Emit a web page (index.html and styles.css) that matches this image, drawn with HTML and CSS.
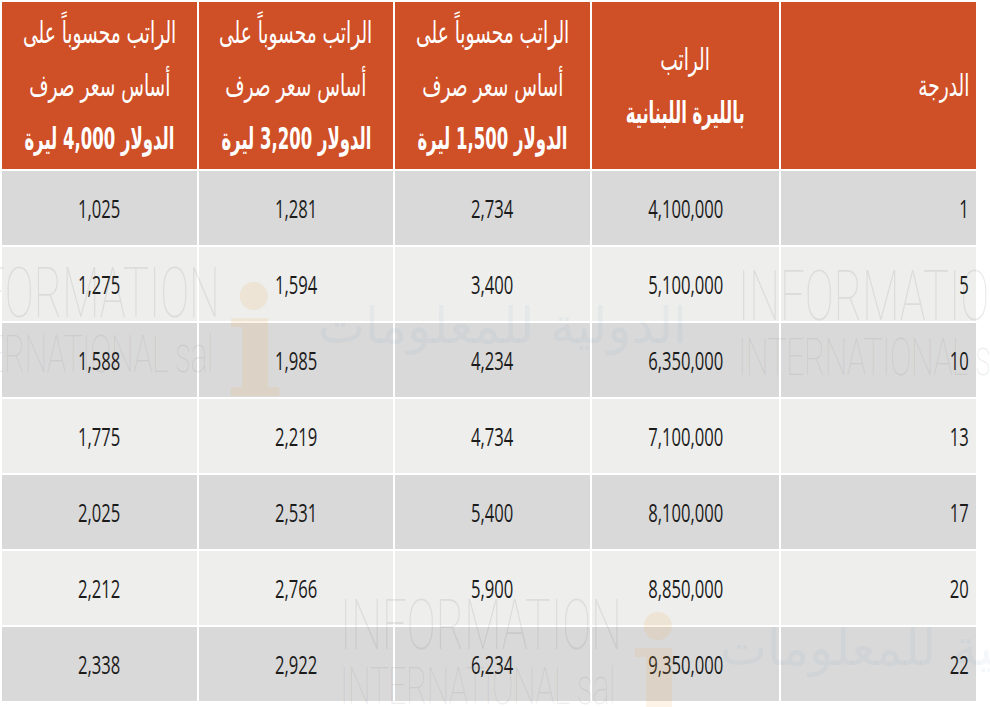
FILE: index.html
```html
<!DOCTYPE html>
<html lang="ar">
<head>
<meta charset="utf-8">
<title>الرواتب</title>
<link rel="stylesheet" href="styles.css">
</head>
<body>
<div class="sheet">
  <div class="grid" dir="rtl">
    <div class="th th-side"><span class="l">الدرجة</span></div>
    <div class="th"><span class="l">الراتب</span><span class="l b">بالليرة اللبنانية</span></div>
    <div class="th"><span class="l">الراتب محسوباً على</span><span class="l">أساس سعر صرف</span><span class="l b">الدولار 1,500 ليرة</span></div>
    <div class="th"><span class="l">الراتب محسوباً على</span><span class="l">أساس سعر صرف</span><span class="l b">الدولار 3,200 ليرة</span></div>
    <div class="th"><span class="l">الراتب محسوباً على</span><span class="l">أساس سعر صرف</span><span class="l b">الدولار 4,000 ليرة</span></div>

    <div class="td dark side"><span class="n">1</span></div>
    <div class="td dark"><span class="n">4,100,000</span></div>
    <div class="td dark"><span class="n">2,734</span></div>
    <div class="td dark"><span class="n">1,281</span></div>
    <div class="td dark"><span class="n">1,025</span></div>

    <div class="td side"><span class="n">5</span></div>
    <div class="td"><span class="n">5,100,000</span></div>
    <div class="td"><span class="n">3,400</span></div>
    <div class="td"><span class="n">1,594</span></div>
    <div class="td"><span class="n">1,275</span></div>

    <div class="td dark side"><span class="n">10</span></div>
    <div class="td dark"><span class="n">6,350,000</span></div>
    <div class="td dark"><span class="n">4,234</span></div>
    <div class="td dark"><span class="n">1,985</span></div>
    <div class="td dark"><span class="n">1,588</span></div>

    <div class="td side"><span class="n">13</span></div>
    <div class="td"><span class="n">7,100,000</span></div>
    <div class="td"><span class="n">4,734</span></div>
    <div class="td"><span class="n">2,219</span></div>
    <div class="td"><span class="n">1,775</span></div>

    <div class="td dark side"><span class="n">17</span></div>
    <div class="td dark"><span class="n">8,100,000</span></div>
    <div class="td dark"><span class="n">5,400</span></div>
    <div class="td dark"><span class="n">2,531</span></div>
    <div class="td dark"><span class="n">2,025</span></div>

    <div class="td side"><span class="n">20</span></div>
    <div class="td"><span class="n">8,850,000</span></div>
    <div class="td"><span class="n">5,900</span></div>
    <div class="td"><span class="n">2,766</span></div>
    <div class="td"><span class="n">2,212</span></div>

    <div class="td dark side"><span class="n">22</span></div>
    <div class="td dark"><span class="n">9,350,000</span></div>
    <div class="td dark"><span class="n">6,234</span></div>
    <div class="td dark"><span class="n">2,922</span></div>
    <div class="td dark"><span class="n">2,338</span></div>
  </div>

  <div class="wm wm-1" aria-hidden="true">
    <div class="wm-en"><span class="wm-l1">INFORMATION</span><span class="wm-l2">INTERNATIONAL sal</span></div>
    <div class="wm-i">i</div>
    <div class="wm-ar">الدولية للمعلومات</div>
  </div>
  <div class="wm wm-2" aria-hidden="true">
    <div class="wm-en"><span class="wm-l1">INFORMATION</span><span class="wm-l2">INTERNATIONAL sal</span></div>
  </div>
  <div class="wm wm-3" aria-hidden="true">
    <div class="wm-en"><span class="wm-l1">INFORMATION</span><span class="wm-l2">INTERNATIONAL sal</span></div>
    <div class="wm-i">i</div>
    <div class="wm-ar">الدولية للمعلومات</div>
  </div>
</div>
</body>
</html>
```
FILE: styles.css
```css
html, body {
  margin: 0;
  padding: 0;
  background: #ffffff;
}

.sheet {
  position: relative;
  width: 990px;
  height: 707px;
  overflow: hidden;
  padding: 2px 0 0 2px;
  box-sizing: border-box;
}

.grid {
  display: grid;
  width: max-content;
  grid-template-columns: 195px 187px 195px 194px 195px;
  grid-template-rows: 167px repeat(7, 74px);
  gap: 2px;
  background: #ffffff;
}

.th {
  background: #cf5027;
  color: #ffffff;
  display: flex;
  flex-direction: column;
  align-items: center;
  justify-content: center;
  font-family: "DejaVu Sans", sans-serif;
  font-size: 30px;
}

.th-side {
  align-items: flex-start;
  padding-right: 7px;
}

.l {
  display: block;
  line-height: 53px;
  height: 53px;
  white-space: nowrap;
  transform: scaleX(0.62);
  font-weight: 400;
}

.th-side .l {
  transform-origin: right center;
}

.l.b {
  font-weight: 700;
  transform: scaleX(0.55);
}

.td {
  background: #eeeeec;
  display: flex;
  align-items: center;
  justify-content: center;
  font-family: "Open Sans", sans-serif;
  font-size: 26px;
  color: #1b1b1b;
}

.td.dark {
  background: #d9d9d9;
}

.td.side {
  justify-content: flex-start;
  padding-right: 7px;
}

.n {
  display: inline-block;
  transform: scaleX(0.64);
  white-space: nowrap;
  direction: ltr;
}

.td.side .n {
  transform-origin: right center;
}

/* watermarks laid over the table */
.wm {
  position: absolute;
  pointer-events: none;
}

.wm-en {
  display: flex;
  flex-direction: column;
  font-family: Roboto, sans-serif;
  font-weight: 100;
  color: rgba(120, 120, 120, 0.15);
  transform: scaleX(0.62);
  transform-origin: left top;
  white-space: nowrap;
}

.wm-l1 {
  font-size: 70px;
  line-height: 74px;
}

.wm-l2 {
  font-size: 52px;
  line-height: 50px;
  letter-spacing: -1px;
}

.wm-i {
  position: absolute;
  font-family: "DejaVu Serif", serif;
  font-weight: 700;
  font-size: 150px;
  line-height: 150px;
  color: rgba(240, 170, 80, 0.14);
}

.wm-ar {
  position: absolute;
  font-family: "DejaVu Sans", sans-serif;
  font-size: 50px;
  line-height: 60px;
  white-space: nowrap;
  color: rgba(90, 140, 190, 0.06);
  direction: rtl;
}

.wm-1 { left: -62px; top: 256px; }
.wm-1 .wm-i { left: 288px; top: 12px; }
.wm-1 .wm-ar { left: 380px; top: 40px; }

.wm-2 { left: 738px; top: 259px; }

.wm-3 { left: 340px; top: 588px; }
.wm-3 .wm-i { left: 290px; top: 10px; }
.wm-3 .wm-ar { left: 380px; top: 30px; }
```
